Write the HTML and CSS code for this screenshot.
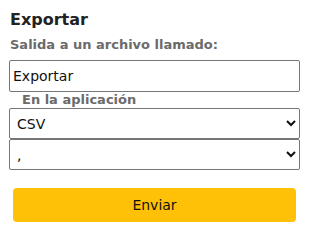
FILE: index.html
```html
<!DOCTYPE html>
<html lang="es">
<head>
    <meta charset="UTF-8">
    <meta name="viewport" content="width=device-width, initial-scale=1.0">
    <title>Exportar</title>
    <link rel="stylesheet" href="styles.css">
</head>
<body>
    <div class="panel">
        <h1>Exportar</h1>
        <form id="exportForm">
            <label class="field-label">Salida a un archivo llamado:</label>
            <input type="text" name="file_name" value="Exportar">

            <label class="field-label sub">En la aplicación</label>
            <div class="select-stack">
                <select name="format">
                    <option value="csv">CSV</option>
                    <option value="json">JSON</option>
                </select>
                <select name="separator">
                    <option value=",">,</option>
                    <option value=";">;</option>
                </select>
            </div>

            <button type="submit">Enviar</button>
        </form>
    </div>
</body>
</html>
```

FILE: styles.css
```css
:root {
    --label-color: #6b6b6b;
    --border-color: #767676;
    --accent-color: #FFC107;
}

* {
    box-sizing: border-box;
    margin: 0;
    padding: 0;
}

body {
    font-family: 'DejaVu Sans', sans-serif;
    background: white;
    color: #222;
}

.panel {
    padding: 10px 10px 0 9px;
}

h1 {
    font-size: 16px;
    font-weight: bold;
    line-height: 20px;
    color: #222;
    margin-bottom: 7px;
    padding-left: 1px;
}

form {
    display: flex;
    flex-direction: column;
}

.field-label {
    display: block;
    font-size: 13px;
    font-weight: bold;
    line-height: 16px;
    color: var(--label-color);
    padding-left: 1px;
    margin-bottom: 7px;
}

.field-label.sub {
    padding-left: 13px;
    margin-bottom: 0;
}

input, select {
    width: 100%;
    height: 32px;
    padding: 0 3px;
    border: 1px solid var(--border-color);
    border-radius: 2px;
    font-family: 'DejaVu Sans', sans-serif;
    font-size: 14px;
    color: #111;
    background: white;
}

.select-stack {
    display: flex;
    flex-direction: column;
}

.select-stack select {
    height: 31px;
}

button {
    margin: 18px 4px 0 4px;
    height: 34px;
    background: var(--accent-color);
    color: #111;
    border: none;
    border-radius: 4px;
    font-family: 'DejaVu Sans', sans-serif;
    font-size: 14px;
    cursor: pointer;
}
```
